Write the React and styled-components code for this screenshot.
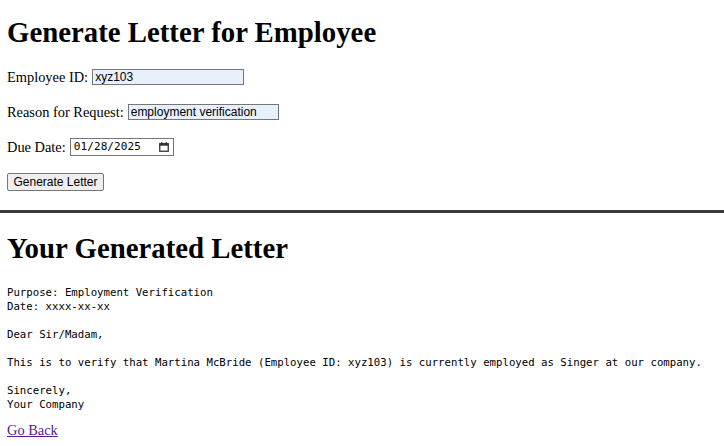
import React from "react";
import styled, { createGlobalStyle } from "styled-components";

const Global = createGlobalStyle`
  html, body { margin: 0; padding: 0; background: #fff; }
  body { font-family: "Liberation Serif", "Times New Roman", serif; color: #000; }
`;

const Page = styled.div`
  display: flex;
  flex-direction: column;
`;

const Section = styled.section`
  display: flex;
  flex-direction: column;
  align-items: flex-start;
  padding: 0 7px ${(p) => p.$pb || 0}px;
  border-top: ${(p) => (p.$divider ? "3px solid #3a3a3a" : "none")};
`;

const Heading = styled.h1`
  margin: ${(p) => p.$mt}px 0 0;
  font-family: "Liberation Serif", "Times New Roman", serif;
  font-size: 28.8px;
  font-weight: bold;
  line-height: 32px;
`;

const Form = styled.form`
  display: flex;
  flex-direction: column;
  gap: 17px;
  margin-top: 20px;
`;

const Row = styled.div`
  display: flex;
  align-items: center;
  gap: 4px;
  height: 18px;
  font-size: 14.4px;
  line-height: 16px;
`;

const Label = styled.label`
  font-family: "Liberation Serif", "Times New Roman", serif;
  font-size: 14.4px;
`;

const TextInput = styled.input`
  box-sizing: border-box;
  width: ${(p) => p.$w || 152}px;
  height: 16px;
  margin: 0;
  padding: 0 2px;
  border: 1px solid #767676;
  border-radius: 0;
  background: #e8f0fe;
  font-family: "Liberation Sans", Arial, sans-serif;
  font-size: 12px;
  color: #000;
  outline: none;
`;

const DateField = styled.div`
  box-sizing: border-box;
  width: 104px;
  height: 18px;
  display: flex;
  align-items: center;
  justify-content: space-between;
  padding: 0 4px 0 3px;
  border: 1px solid #767676;
  background: #fff;
  font-family: "DejaVu Sans Mono", monospace;
  font-size: 11px;
  color: #000;
`;

const DateText = styled.span`
  letter-spacing: 0.1px;
`;

const Button = styled.button`
  box-sizing: border-box;
  width: 97px;
  height: 18px;
  margin: 0;
  padding: 0;
  border: 1px solid #767676;
  border-radius: 2px;
  background: #efefef;
  font-family: "Liberation Sans", Arial, sans-serif;
  font-size: 12px;
  color: #000;
`;

const Letter = styled.pre`
  margin: 22px 0 0;
  font-family: "DejaVu Sans Mono", monospace;
  font-size: 10.7px;
  line-height: 14px;
  white-space: pre;
`;

const BackLink = styled.a`
  margin-top: 10px;
  font-family: "Liberation Serif", "Times New Roman", serif;
  font-size: 14.4px;
  line-height: 17px;
  color: #551a8b;
  text-decoration: underline;
`;

const CalendarIcon = () => (
  <svg width="10" height="10" viewBox="0 0 10 10" aria-hidden="true">
    <rect x="0.75" y="1.75" width="8.5" height="7.5" fill="none" stroke="#333" strokeWidth="1.3" />
    <rect x="0.5" y="1.5" width="9" height="2.2" fill="#333" />
    <rect x="2.2" y="0" width="1.2" height="2" fill="#333" />
    <rect x="6.6" y="0" width="1.2" height="2" fill="#333" />
  </svg>
);

const letterText = `Purpose: Employment Verification
Date: xxxx-xx-xx

Dear Sir/Madam,

This is to verify that Martina McBride (Employee ID: xyz103) is currently employed as Singer at our company.

Sincerely,
Your Company`;

export default function App() {
  return (
    <Page>
      <Global />
      <Section $pb={19}>
        <Heading $mt={16}>Generate Letter for Employee</Heading>
        <Form onSubmit={(e) => e.preventDefault()}>
          <Row>
            <Label htmlFor="emp">Employee ID:</Label>
            <TextInput id="emp" defaultValue="xyz103" />
          </Row>
          <Row>
            <Label htmlFor="reason">Reason for Request:</Label>
            <TextInput id="reason" $w={151} defaultValue="employment verification" />
          </Row>
          <Row>
            <Label>Due Date:</Label>
            <DateField>
              <DateText>01/28/2025</DateText>
              <CalendarIcon />
            </DateField>
          </Row>
          <Row>
            <Button type="submit">Generate Letter</Button>
          </Row>
        </Form>
      </Section>
      <Section $divider>
        <Heading $mt={19}>Your Generated Letter</Heading>
        <Letter>{letterText}</Letter>
        <BackLink href="#">Go Back</BackLink>
      </Section>
    </Page>
  );
}
